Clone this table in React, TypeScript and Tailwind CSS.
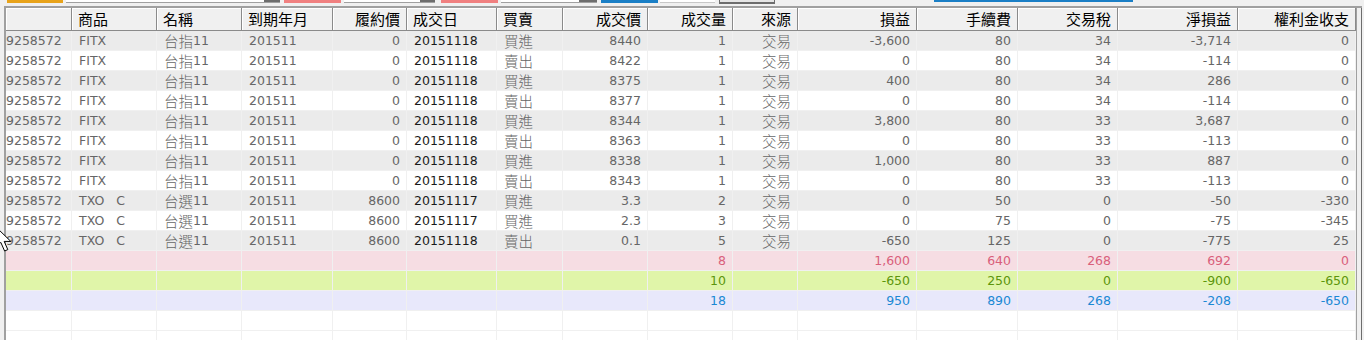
type Col = { label: string; align: "l" | "r" }

const cols: Col[] = [
  { label: "", align: "l" },
  { label: "商品", align: "l" },
  { label: "名稱", align: "l" },
  { label: "到期年月", align: "l" },
  { label: "履約價", align: "r" },
  { label: "成交日", align: "l" },
  { label: "買賣", align: "l" },
  { label: "成交價", align: "r" },
  { label: "成交量", align: "r" },
  { label: "來源", align: "r" },
  { label: "損益", align: "r" },
  { label: "手續費", align: "r" },
  { label: "交易稅", align: "r" },
  { label: "淨損益", align: "r" },
  { label: "權利金收支", align: "r" },
]

const fitx = (bs: string, price: string, pl: string, tax: string, net: string) => [
  "9258572", "FITX", "台指11", "201511", "0", "20151118", bs, price, "1", "交易", pl, "80", tax, net, "0",
]
const txo = (date: string, bs: string, price: string, qty: string, pl: string, fee: string, net: string, prem: string) => [
  "9258572", "TXO   C", "台選11", "201511", "8600", date, bs, price, qty, "交易", pl, fee, "0", net, prem,
]

const rows = [
  fitx("買進", "8440", "-3,600", "34", "-3,714"),
  fitx("賣出", "8422", "0", "34", "-114"),
  fitx("買進", "8375", "400", "34", "286"),
  fitx("賣出", "8377", "0", "34", "-114"),
  fitx("買進", "8344", "3,800", "33", "3,687"),
  fitx("賣出", "8363", "0", "33", "-113"),
  fitx("買進", "8338", "1,000", "33", "887"),
  fitx("賣出", "8343", "0", "33", "-113"),
  txo("20151117", "買進", "3.3", "2", "0", "50", "-50", "-330"),
  txo("20151117", "買進", "2.3", "3", "0", "75", "-75", "-345"),
  txo("20151118", "賣出", "0.1", "5", "-650", "125", "-775", "25"),
]

const blank = (qty: string, pl: string, fee: string, tax: string, net: string, prem: string) => [
  "", "", "", "", "", "", "", "", qty, "", pl, fee, tax, net, prem,
]

const totals = [
  { bg: "bg-[#f6dde3]", fg: "text-[#d9607b]", cells: blank("8", "1,600", "640", "268", "692", "0") },
  { bg: "bg-[#e0f5a9]", fg: "text-[#5c950c]", cells: blank("10", "-650", "250", "0", "-900", "-650") },
  { bg: "bg-[#e8e8fb]", fg: "text-[#1b88d4]", cells: blank("18", "950", "890", "268", "-208", "-650") },
]

const grid =
  "grid grid-cols-[66px_85px_85px_91px_74px_90px_66px_85px_85px_65px_119px_101px_100px_120px_118px]"

// CJK glyphs sit a size larger than the digits in the original grid
function Mixed({ text }: { text: string }) {
  const parts = text.split(/([\u4e00-\u9fff]+)/).filter(Boolean)
  return (
    <>
      {parts.map((p, i) =>
        /[\u4e00-\u9fff]/.test(p) ? (
          <span key={i} className="leading-none font-['Noto_Sans_CJK_TC',sans-serif] text-[14.5px] font-light mt-[-1px]">
            {p}
          </span>
        ) : (
          <span key={i} className="leading-none whitespace-pre">
            {p}
          </span>
        )
      )}
    </>
  )
}

function Cell({ text, align, first, tone }: { text: string; align: "l" | "r"; first: boolean; tone: string }) {
  const pad = first ? "pl-0 justify-start" : align === "l" ? "pl-[7px] justify-start" : "pr-[6px] justify-end"
  return (
    <div
      className={`h-[20px] pt-[2px] flex items-center border-r border-b border-[#f0f0f0] overflow-hidden ${pad} ${tone}`}
    >
      <Mixed text={text} />
    </div>
  )
}

function Cursor() {
  return (
    <svg className="absolute left-[-5px] top-[226px]" width="18" height="27" viewBox="0 0 18 27">
      <path d="M1 1 L1 21 L5.8 16.4 L9.6 25 L12.8 23.6 L9.2 15.4 L15.8 15.4 Z" fill="#fff" stroke="#000" strokeWidth="1" />
    </svg>
  )
}

export default function App() {
  return (
    <div className="relative w-[1364px] h-[340px] overflow-hidden bg-[#f0f0f0]">
      {/* toolbar strip, mostly scrolled off */}
      <div className="h-[6px] flex items-start">
        <div className="ml-[7px] w-[56px] h-[3px] bg-[#e8a31a]" />
        <div className="ml-[3px] w-[214px] h-[3px] bg-white border-b border-[#a0a0a0] flex justify-end">
          <div className="w-[16px] h-[2px] bg-[#6d6d6d]" />
        </div>
        <div className="ml-[4px] w-[57px] h-[3px] bg-[#f08080]" />
        <div className="ml-[3px] w-[91px] h-[3px] bg-white border-b border-[#a0a0a0] flex justify-end">
          <div className="w-[15px] h-[2px] bg-[#6d6d6d]" />
        </div>
        <div className="ml-[6px] w-[57px] h-[3px] bg-[#f08080]" />
        <div className="ml-[3px] w-[96px] h-[3px] bg-white border-b border-[#a0a0a0] flex justify-end">
          <div className="w-[18px] h-[2px] bg-[#6d6d6d]" />
        </div>
        <div className="ml-[4px] w-[57px] h-[3px] bg-[#1a7fc6]" />
        <div className="ml-[2px] w-[55px] h-[3px] bg-white border-b border-[#c8c8c8]" />
        <div className="ml-[4px] w-[56px] h-[4px] bg-[#e6e6e6] border-b-2 border-r border-l border-[#6d6d6d]" />
        <div className="ml-[159px] w-[199px] h-[2px] bg-[#1a7fc6]" />
      </div>

      <div className="flex">
        <div className="ml-[4px] w-[1358px] h-[334px] border-t-2 border-l-2 border-[#a0a0a0] flex">
          <div className="w-[1350px] bg-white font-['DejaVu_Sans','Noto_Sans_CJK_TC',sans-serif] text-[12.5px]">
            <div className={`${grid} h-[23px] bg-[#f0f0f0] border-b border-[#8a8a8a] font-['Noto_Sans_CJK_TC',sans-serif] text-[15px] text-black`}>
              {cols.map((c, i) => (
                <div
                  key={i}
                  className={`h-[22px] leading-[22px] border-r border-[#8a8a8a] shadow-[inset_1px_1px_0_#ffffff] ${
                    c.align === "l" ? "pl-[6px] text-left" : "pr-[6px] text-right"
                  }`}
                >
                  {c.label}
                </div>
              ))}
            </div>

            {rows.map((r, ri) => (
              <div key={ri} className={`${grid} ${ri % 2 === 0 ? "bg-[#ebebeb]" : "bg-white"}`}>
                {r.map((t, ci) => (
                  <Cell
                    key={ci}
                    text={t}
                    align={cols[ci].align}
                    first={ci === 0}
                    tone={ci === 5 ? "text-[#1a1a1a]" : "text-[#666666]"}
                  />
                ))}
              </div>
            ))}

            {totals.map((t, ri) => (
              <div key={ri} className={`${grid} ${t.bg}`}>
                {t.cells.map((v, ci) => (
                  <Cell key={ci} text={v} align={cols[ci].align} first={ci === 0} tone={t.fg} />
                ))}
              </div>
            ))}

            {[0, 1].map((ri) => (
              <div key={ri} className={`${grid} bg-white`}>
                {cols.map((c, ci) => (
                  <Cell key={ci} text="" align={c.align} first={ci === 0} tone="" />
                ))}
              </div>
            ))}
          </div>
          <div className="w-[6px] border-l border-[#a0a0a0] flex">
            <div className="ml-[4px] w-[1px] bg-[#6d6d6d]" />
          </div>
        </div>
      </div>

      <Cursor />
    </div>
  )
}
